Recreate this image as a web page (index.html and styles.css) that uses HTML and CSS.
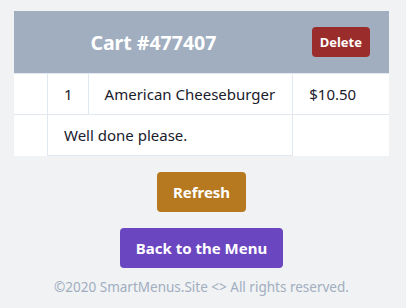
FILE: index.html
```html
<!DOCTYPE html>
<html lang="en">
<head>
    <meta charset="UTF-8">
    <meta name="viewport" content="width=device-width, initial-scale=1.0">
    <title>Cart</title>
    <link rel="stylesheet" href="styles.css">
</head>
<body>
    <div class="cart">
        <table class="cart-table">
            <thead>
                <tr>
                    <th colspan="3" class="cart-title">Cart #477407</th>
                    <th class="cart-action"><button type="button" class="btn-delete">Delete</button></th>
                </tr>
            </thead>
            <tbody>
                <tr>
                    <td class="cell-blank"></td>
                    <td class="cell cell-fit cell-qty">1</td>
                    <td class="cell cell-fit cell-name">American Cheeseburger</td>
                    <td class="cell">$10.50</td>
                </tr>
                <tr>
                    <td class="cell-blank"></td>
                    <td colspan="2" class="cell">Well done please.</td>
                    <td class="cell cell-last"></td>
                </tr>
            </tbody>
        </table>

        <div class="actions">
            <button type="button" class="btn btn-refresh">Refresh</button>
            <button type="button" class="btn btn-menu">Back to the Menu</button>
        </div>

        <p class="footer">&copy;2020 SmartMenus.Site &lt;&gt; All rights reserved.</p>
    </div>
</body>
</html>
```

FILE: styles.css
```css
body {
    margin: 0;
    background-color: #f1f2f4;
    font-family: "Noto Sans", "Open Sans", sans-serif;
    color: #1a202c;
}

.cart {
    padding: 11px 17px 0 14px;
}

.cart-table {
    width: 100%;
    border-collapse: collapse;
    background-color: #fff;
}

.cart-table thead {
    background-color: #a0aec0;
}

.cart-title {
    height: 62px;
    padding: 0 16px;
    font-size: 19.5px;
    font-weight: 700;
    color: #fff;
    text-align: center;
}

.cart-action {
    text-align: center;
    padding: 0;
}

.btn-delete {
    height: 30px;
    padding: 0 8px;
    border: none;
    border-radius: 4px;
    background-color: #9b2c2c;
    color: #fff;
    font-family: inherit;
    font-size: 13px;
    font-weight: 700;
}

.cell {
    height: 24px;
    padding: 8px 16px;
    font-size: 15px;
    line-height: 24px;
    border: 1px solid #e2e8f0;
    text-align: left;
    white-space: nowrap;
}

.cell-blank {
    width: 1%;
    padding: 8px 16px 8px 17px;
    border-top: 1px solid #e2e8f0;
}

.cell-fit {
    width: 1%;
}

.cell-qty {
    padding-right: 15px;
}

.cell-name {
    padding-right: 17px;
}

.cart-table tr td:last-child {
    border-right: none;
}

.cart-table tbody tr:last-child .cell-last {
    border-bottom: none;
}

.actions {
    display: flex;
    flex-direction: column;
    align-items: center;
    gap: 16px;
    margin-top: 16px;
}

.btn {
    height: 40px;
    padding: 0 16px;
    border: none;
    border-radius: 4px;
    color: #fff;
    font-family: inherit;
    font-size: 15px;
    font-weight: 700;
    cursor: pointer;
}

.btn-refresh {
    background-color: #b7791f;
}

.btn-menu {
    background-color: #6b46c1;
}

.footer {
    margin: 10px 0 0;
    text-align: center;
    font-size: 13.5px;
    color: #a0aec0;
}
```
